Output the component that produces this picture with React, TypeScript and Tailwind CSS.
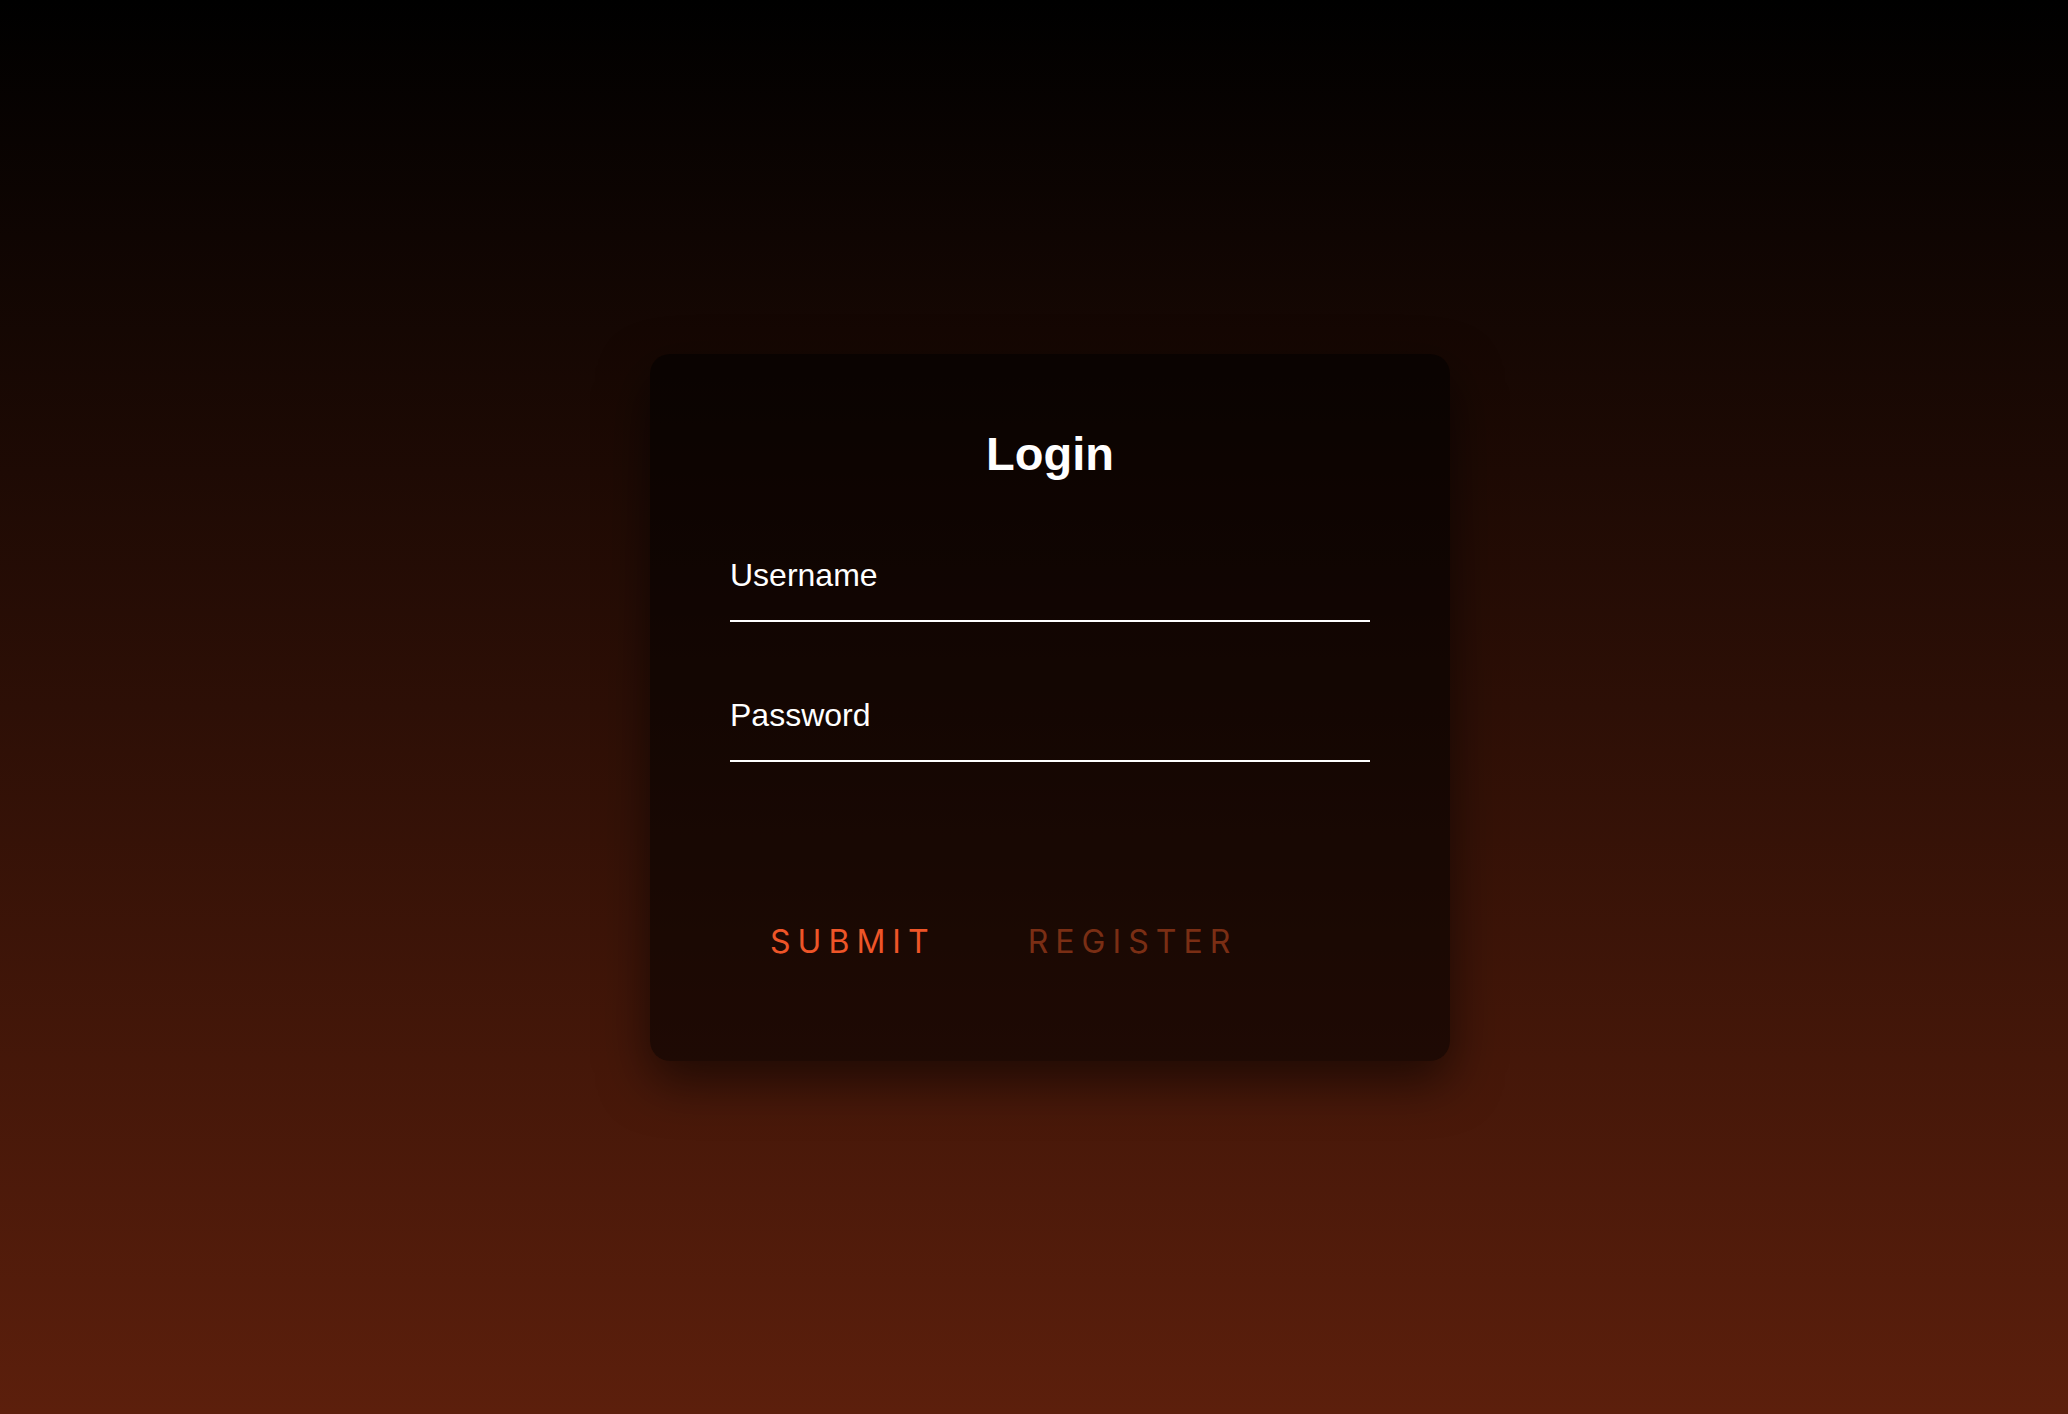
import React from "react";

export default function App() {
  return (
    <main className="min-h-screen w-full flex items-center justify-center pl-8 bg-[linear-gradient(to_bottom,#000000_0%,#2d0f06_50%,#5c1f0c_100%)]">
      {/* Login card */}
      <form
        onSubmit={(e) => e.preventDefault()}
        className="w-[800px] h-[707px] flex flex-col px-20 pt-[73px] rounded-[20px] bg-black/55 shadow-[0_20px_50px_rgba(0,0,0,0.55)]"
      >
        <h2 className="text-center text-white font-bold text-[47px] leading-[54px] font-['Liberation_Sans',Arial,sans-serif]">
          Login
        </h2>

        <label className="mt-[74px] block border-b-2 border-white">
          <span className="block text-white text-[32px] leading-[40px] font-['Liberation_Sans',Arial,sans-serif]">
            Username
          </span>
          <input type="text" className="block w-full h-[25px] bg-transparent outline-none text-white" />
        </label>

        <label className="mt-[73px] block border-b-2 border-white">
          <span className="block text-white text-[32px] leading-[40px] font-['Liberation_Sans',Arial,sans-serif]">
            Password
          </span>
          <input type="password" className="block w-full h-[25px] bg-transparent outline-none text-white" />
        </label>

        <div className="mt-[160px] flex items-center gap-3">
          <button
            type="submit"
            className="px-10 text-[32px] leading-[40px] tracking-[0.22em] uppercase text-[#ee5528] font-['Inter',sans-serif]"
          >
            Submit
          </button>
          <button
            type="button"
            className="px-10 text-[32px] leading-[40px] tracking-[0.22em] uppercase text-[#7a2e14] font-['Inter',sans-serif]"
          >
            Register
          </button>
        </div>
      </form>
    </main>
  );
}
